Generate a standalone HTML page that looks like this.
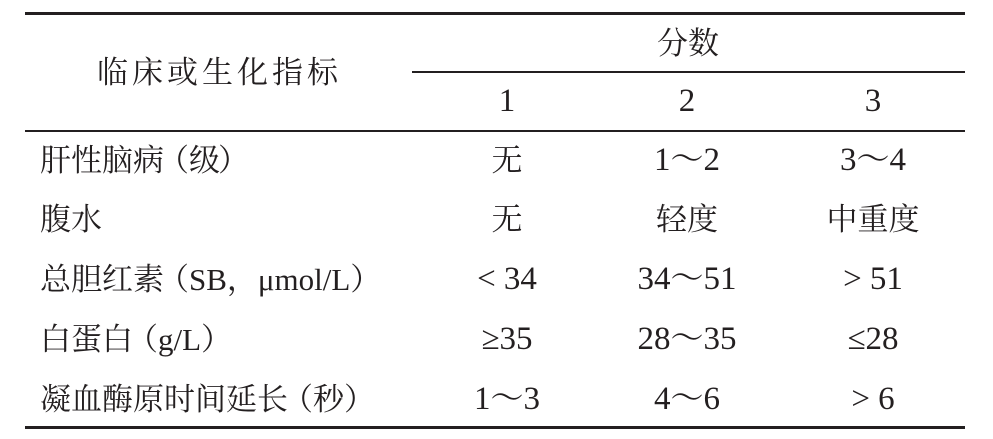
<!DOCTYPE html>
<html><head><meta charset="utf-8"><style>
body{margin:0;width:993px;height:439px;background:#fff;position:relative;overflow:hidden;font-family:"Liberation Serif","Noto Serif CJK SC",serif;color:#231f20;font-size:31px}
.l{position:absolute;background:#231f20}
.t{position:absolute;white-space:nowrap;line-height:1}
.c{position:absolute;white-space:nowrap;line-height:1;transform:translateX(-50%)}
.n{font-size:33px}
</style></head><body>
<div class="l" style="left:25px;top:12px;width:940px;height:3px"></div>
<div class="l" style="left:412px;top:71px;width:553px;height:2px"></div>
<div class="l" style="left:25px;top:130px;width:940px;height:2px"></div>
<div class="l" style="left:25px;top:426px;width:940px;height:3px"></div>
<div class="t" style="left:97px;top:57px;letter-spacing:4px">临床或生化指标</div>
<div class="c" style="left:688px;top:28px">分数</div>
<div class="c n" style="left:507px;top:85px">1</div>
<div class="c n" style="left:687px;top:85px">2</div>
<div class="c n" style="left:873px;top:85px">3</div>

<div class="t" style="left:40px;top:145px">肝性脑病<span style="margin-left:-6px">（级</span><span style="margin-left:-2px">）</span></div>
<div class="c" style="left:507px;top:145px">无</div>
<div class="c n" style="left:687px;top:144px">1～2</div>
<div class="c n" style="left:873px;top:144px">3～4</div>

<div class="t" style="left:40px;top:204px">腹水</div>
<div class="c" style="left:507px;top:204px">无</div>
<div class="c" style="left:687px;top:204px">轻度</div>
<div class="c" style="left:873px;top:204px">中重度</div>

<div class="t" style="left:40px;top:264px">总胆红素<span style="margin-left:-6px">（SB，μmol/L）</span></div>
<div class="c n" style="left:507px;top:263px">&lt; 34</div>
<div class="c n" style="left:687px;top:263px">34～51</div>
<div class="c n" style="left:873px;top:263px">&gt; 51</div>

<div class="t" style="left:40px;top:324px">白蛋白<span style="margin-left:-6px">（g/L）</span></div>
<div class="c n" style="left:507px;top:323px">≥35</div>
<div class="c n" style="left:687px;top:323px">28～35</div>
<div class="c n" style="left:873px;top:323px">≤28</div>

<div class="t" style="left:40px;top:384px">凝血酶原时间延长<span style="margin-left:-6px">（秒）</span></div>
<div class="c n" style="left:507px;top:383px">1～3</div>
<div class="c n" style="left:687px;top:383px">4～6</div>
<div class="c n" style="left:873px;top:383px">&gt; 6</div>
</body></html>
